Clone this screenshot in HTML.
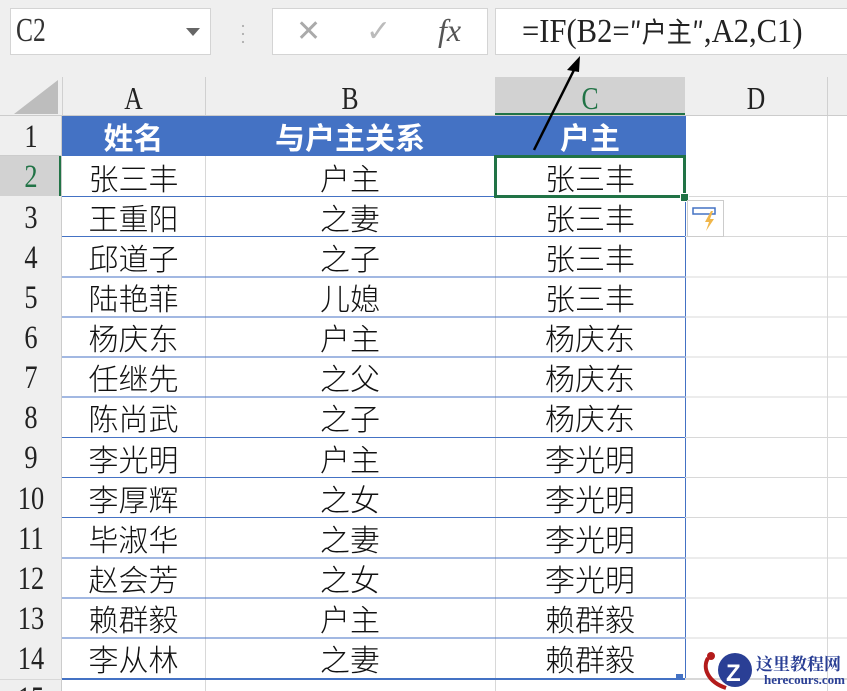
<!DOCTYPE html><html><head><meta charset="utf-8"><style>
html,body{margin:0;width:847px;height:691px;overflow:hidden}
body{background:#fff;position:relative;font-family:"Liberation Serif","Noto Sans CJK SC",serif}
.a{position:absolute}
.top{left:0;top:0;width:847px;height:116px;background:#efefef}
.box{background:#fff;border:1px solid #d4d4d4;box-sizing:border-box}
.cjk{font-family:"Noto Sans CJK SC","WenQuanYi Zen Hei",sans-serif}
.cell{position:absolute;text-align:center;font-family:"Noto Sans CJK SC",sans-serif;font-size:30px;line-height:40px;color:#111;font-weight:300}
.rn{position:absolute;left:0;width:62px;text-align:center;font-size:33px;line-height:42px;color:#222;transform:scaleX(.8)}
.ch{position:absolute;top:77px;height:38px;line-height:42px;text-align:center;font-size:32px;color:#222}
</style></head><body>
<div class="a top"></div>
<div class="a box" style="left:10px;top:8px;width:201px;height:47px"></div>
<div class="a" style="left:16px;top:12px;font-size:34px;color:#333;transform:scaleX(.75);transform-origin:left">C2</div>
<div class="a" style="left:186px;top:28px;width:0;height:0;border-left:7px solid transparent;border-right:7px solid transparent;border-top:8px solid #666"></div>
<div class="a" style="left:240px;top:22px;color:#aaa;font-size:18px;line-height:8px">·<br>·<br>·</div>
<div class="a box" style="left:272px;top:8px;width:216px;height:47px"></div>
<div class="a" style="left:296px;top:14px;font-size:30px;color:#aaa;font-family:'DejaVu Sans'">✕</div>
<div class="a" style="left:366px;top:14px;font-size:30px;color:#bbb;font-family:'DejaVu Sans'">✓</div>
<div class="a" style="left:438px;top:12px;font-size:32px;color:#555;font-style:italic">fx</div>
<div class="a box" style="left:495px;top:8px;width:360px;height:47px"></div>
<div class="a" style="left:522px;top:11px;font-size:34px;color:#222;white-space:nowrap;transform:scaleX(.9);transform-origin:left">=IF(B2=<span class="cjk" style="font-size:28px">″户主″</span>,A2,C1)</div>
<div class="a" style="left:14px;top:80px;width:0;height:0;border-left:44px solid transparent;border-bottom:34px solid #bdbdbd"></div>
<div class="a" style="left:62px;top:77px;width:1px;height:39px;background:#d0d0d0"></div>
<div class="a" style="left:205px;top:77px;width:1px;height:39px;background:#d0d0d0"></div>
<div class="a" style="left:495px;top:77px;width:190px;height:39px;background:#d2d2d2;border-bottom:3px solid #217346;box-sizing:border-box"></div>
<div class="a" style="left:827px;top:77px;width:1px;height:39px;background:#d0d0d0"></div>
<div class="a" style="left:0;top:115px;width:847px;height:1px;background:#ccc"></div>
<div class="ch" style="left:62px;width:143px;transform:scaleX(.8)">A</div>
<div class="ch" style="left:205px;width:290px;transform:scaleX(.8)">B</div>
<div class="ch" style="left:495px;width:190px;color:#217346;transform:scaleX(.8)">C</div>
<div class="ch" style="left:685px;width:142px;transform:scaleX(.8)">D</div>
<div class="a" style="left:0;top:116px;width:62px;height:575px;background:#efefef"></div>
<div class="a" style="left:0;top:156px;width:62px;height:40px;background:#d2d2d2;border-right:3px solid #217346;box-sizing:border-box"></div>
<div class="a" style="left:61px;top:116px;width:1px;height:575px;background:#ccc"></div>
<div class="a" style="left:62px;top:116px;width:623px;height:40px;background:#4472c4"></div>
<div class="a" style="left:205px;top:156px;width:1px;height:535px;background:#d8d8d8"></div>
<div class="a" style="left:495px;top:156px;width:1px;height:535px;background:#d8d8d8"></div>
<div class="a" style="left:685px;top:116px;width:1px;height:564px;background:#4472c4"></div>
<div class="a" style="left:827px;top:116px;width:1px;height:575px;background:#d8d8d8"></div>
<div class="cell" style="left:62px;top:116px;width:143px;color:#fff;font-weight:bold">姓名</div>
<div class="cell" style="left:205px;top:116px;width:290px;color:#fff;font-weight:bold">与户主关系</div>
<div class="cell" style="left:495px;top:116px;width:190px;color:#fff;font-weight:bold">户主</div>
<div class="rn" style="top:116px">1</div>
<div class="rn" style="top:156px;color:#217346">2</div>
<div class="rn" style="top:197px">3</div><div class="rn" style="top:237px">4</div><div class="rn" style="top:277px">5</div><div class="rn" style="top:317px">6</div><div class="rn" style="top:357px">7</div><div class="rn" style="top:397px">8</div><div class="rn" style="top:437px">9</div><div class="rn" style="top:478px">10</div><div class="rn" style="top:518px">11</div><div class="rn" style="top:558px">12</div><div class="rn" style="top:598px">13</div><div class="rn" style="top:638px">14</div><div class="rn" style="top:678px">15</div>
<div class="a" style="left:62px;top:196px;width:785px;height:0;border-top:1px solid #d8d8d8"></div>
<div style="position:absolute;left:62px;top:196px;width:623px;height:484px;background:repeating-linear-gradient(to bottom,#4472c4 0,#4472c4 1px,transparent 1px,transparent 40.15px)"></div>
<div style="position:absolute;left:685px;top:196px;width:162px;height:484px;background:repeating-linear-gradient(to bottom,#d8d8d8 0,#d8d8d8 1px,transparent 1px,transparent 40.15px)"></div>
<div class="a" style="left:0;top:679px;width:847px;height:1px;background:#d8d8d8"></div>
<div class="a" style="left:62px;top:679px;width:623px;height:1px;background:#4472c4"></div>
<div class="a" style="left:0;top:155px;width:62px;height:1px;background:#ccc"></div>

<div class="cell" style="left:62px;top:157px;width:143px">张三丰</div><div class="cell" style="left:205px;top:157px;width:290px">户主</div><div class="cell" style="left:495px;top:157px;width:190px">张三丰</div>
<div class="cell" style="left:62px;top:197px;width:143px">王重阳</div><div class="cell" style="left:205px;top:197px;width:290px">之妻</div><div class="cell" style="left:495px;top:197px;width:190px">张三丰</div>
<div class="cell" style="left:62px;top:237px;width:143px">邱道子</div><div class="cell" style="left:205px;top:237px;width:290px">之子</div><div class="cell" style="left:495px;top:237px;width:190px">张三丰</div>
<div class="cell" style="left:62px;top:277px;width:143px">陆艳菲</div><div class="cell" style="left:205px;top:277px;width:290px">儿媳</div><div class="cell" style="left:495px;top:277px;width:190px">张三丰</div>
<div class="cell" style="left:62px;top:317px;width:143px">杨庆东</div><div class="cell" style="left:205px;top:317px;width:290px">户主</div><div class="cell" style="left:495px;top:317px;width:190px">杨庆东</div>
<div class="cell" style="left:62px;top:357px;width:143px">任继先</div><div class="cell" style="left:205px;top:357px;width:290px">之父</div><div class="cell" style="left:495px;top:357px;width:190px">杨庆东</div>
<div class="cell" style="left:62px;top:397px;width:143px">陈尚武</div><div class="cell" style="left:205px;top:397px;width:290px">之子</div><div class="cell" style="left:495px;top:397px;width:190px">杨庆东</div>
<div class="cell" style="left:62px;top:438px;width:143px">李光明</div><div class="cell" style="left:205px;top:438px;width:290px">户主</div><div class="cell" style="left:495px;top:438px;width:190px">李光明</div>
<div class="cell" style="left:62px;top:478px;width:143px">李厚辉</div><div class="cell" style="left:205px;top:478px;width:290px">之女</div><div class="cell" style="left:495px;top:478px;width:190px">李光明</div>
<div class="cell" style="left:62px;top:518px;width:143px">毕淑华</div><div class="cell" style="left:205px;top:518px;width:290px">之妻</div><div class="cell" style="left:495px;top:518px;width:190px">李光明</div>
<div class="cell" style="left:62px;top:558px;width:143px">赵会芳</div><div class="cell" style="left:205px;top:558px;width:290px">之女</div><div class="cell" style="left:495px;top:558px;width:190px">李光明</div>
<div class="cell" style="left:62px;top:598px;width:143px">赖群毅</div><div class="cell" style="left:205px;top:598px;width:290px">户主</div><div class="cell" style="left:495px;top:598px;width:190px">赖群毅</div>
<div class="cell" style="left:62px;top:638px;width:143px">李从林</div><div class="cell" style="left:205px;top:638px;width:290px">之妻</div><div class="cell" style="left:495px;top:638px;width:190px">赖群毅</div>

<div class="a" style="left:494px;top:155px;width:192px;height:43px;border:3px solid #217346;box-sizing:border-box"></div>
<div class="a" style="left:680px;top:193px;width:7px;height:7px;background:#217346;border:1px solid #fff"></div>
<div class="a" style="left:676px;top:674px;width:7px;height:6px;background:#4472c4"></div>
<div class="a" style="left:687px;top:200px;width:37px;height:37px;border:1px solid #ccc;background:#fff;box-sizing:border-box"></div>
<svg class="a" style="left:687px;top:200px" width="37" height="37"><rect x="6" y="8" width="22" height="6" fill="none" stroke="#4472c4" stroke-width="1.5"/><path d="M24 11 L18 22 L22 22 L19 31 L27 19 L23 19 L26 11Z" fill="#f0b64a"/></svg>
<svg class="a" style="left:0;top:0" width="847" height="691"><line x1="534" y1="150" x2="576" y2="66" stroke="#000" stroke-width="2.5"/><path d="M580 56 L567 70 L579 72Z" fill="#000"/></svg>
<svg class="a" style="left:700px;top:648px" width="60" height="43"><path d="M8 10 C2 20 8 34 26 40" stroke="#b31b1b" stroke-width="4" fill="none"/><circle cx="11" cy="8" r="4" fill="#b31b1b"/><circle cx="35" cy="22" r="17" fill="#2a3f95"/><text x="26" y="33" font-size="24" font-weight="bold" fill="#fff" font-family="Liberation Sans">Z</text></svg>
<div class="a" style="left:756px;top:650px;font-size:17px;font-weight:bold;color:#2a3f95;font-family:'Noto Serif CJK SC',serif">这里教程网</div>
<div class="a" style="left:764px;top:672px;font-size:13px;font-weight:bold;color:#2a3f95">herecours.com</div>
</body></html>
